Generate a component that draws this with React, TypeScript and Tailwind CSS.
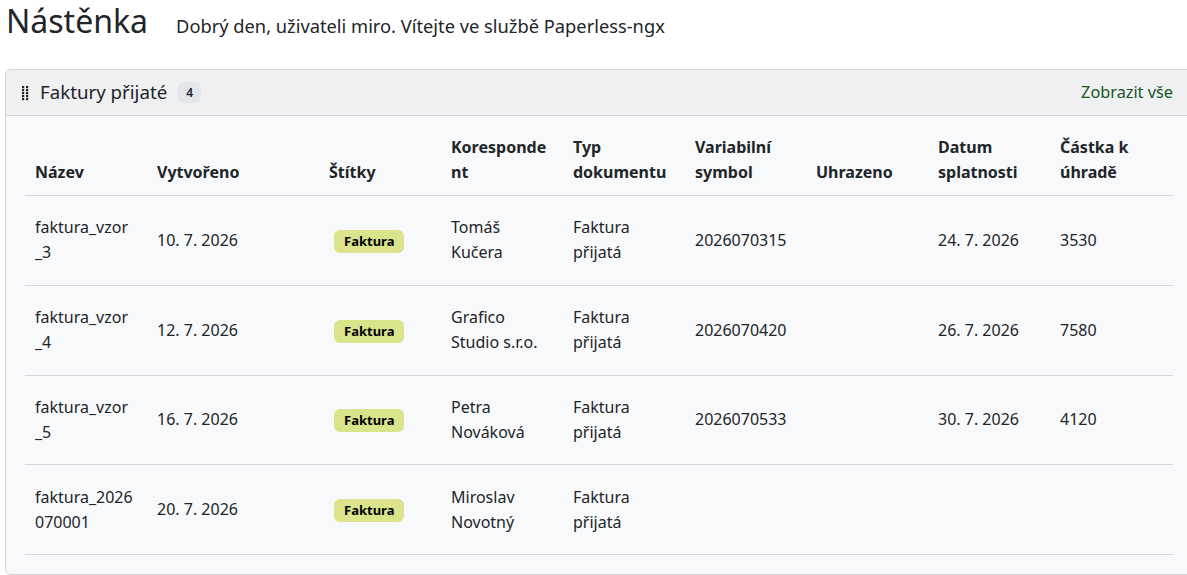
import React from "react";

type Row = {
    name: string[];
    created: string;
    corr: string[];
    type: string[];
    vs: string;
    due: string;
    amount: string;
};

const rows: Row[] = [
    { name: ["faktura_vzor", "_3"], created: "10. 7. 2026", corr: ["Tomáš", "Kučera"], type: ["Faktura", "přijatá"], vs: "2026070315", due: "24. 7. 2026", amount: "3530" },
    { name: ["faktura_vzor", "_4"], created: "12. 7. 2026", corr: ["Grafico", "Studio s.r.o."], type: ["Faktura", "přijatá"], vs: "2026070420", due: "26. 7. 2026", amount: "7580" },
    { name: ["faktura_vzor", "_5"], created: "16. 7. 2026", corr: ["Petra", "Nováková"], type: ["Faktura", "přijatá"], vs: "2026070533", due: "30. 7. 2026", amount: "4120" },
    { name: ["faktura_2026", "070001"], created: "20. 7. 2026", corr: ["Miroslav", "Novotný"], type: ["Faktura", "přijatá"], vs: "", due: "", amount: "" },
];

const cols = "grid grid-cols-[122px_172px_122px_122px_122px_121px_122px_122px_122px]";

function Lines({ parts }: { parts: string[] }) {
    return (
        <span>
            {parts.map((p, i) => (
                <React.Fragment key={i}>
                    {i > 0 && <br />}
                    {p}
                </React.Fragment>
            ))}
        </span>
    );
}

function GripIcon() {
    return (
        <svg width="8" height="16" viewBox="0 0 8 16" className="text-[#222]">
            {[0, 1, 2, 3, 4].map((r) =>
                [0, 1].map((c) => (
                    <rect key={`${r}-${c}`} x={c * 4 + 1} y={r * 3 + 1} width="2.2" height="2.2" fill="currentColor" />
                ))
            )}
        </svg>
    );
}

export default function App() {
    return (
        <div className="min-h-[575px] bg-white text-[#212529] font-['Noto_Sans',sans-serif] overflow-hidden">
            <div className="flex items-baseline pl-[6px] h-[69px]">
                <h1 className="text-[32px] leading-[42px] font-normal">Nástěnka</h1>
                <p className="ml-[28px] text-[18.3px]">Dobrý den, uživateli miro. Vítejte ve službě Paperless-ngx</p>
            </div>

            <div className="ml-[5px] w-[1200px] border border-[#d3d4d8] rounded-md bg-[#f8f9fa]">
                <div className="flex items-center h-[46px] pl-[15px] pr-[26px] bg-[#eff0f2] border-b border-[#d3d4d8] rounded-t-md">
                    <GripIcon />
                    <span className="ml-[11px] text-[18.7px]">Faktury přijaté</span>
                    <span className="ml-[11px] px-[8px] h-[21px] leading-[21px] rounded-md bg-[#e4e7ea] text-[12px] font-semibold">4</span>
                    <a className="ml-auto mr-[5px] text-[16.3px] text-[#17541f]">Zobrazit vše</a>
                </div>

                <div className="pt-[19px] pl-[19px] pb-[19px] w-[1167px]">
                    <div className={`${cols} items-end border-b border-[#d6d7dc] pb-[10px] font-bold text-[16px] leading-[25px]`}>
                        <div className="px-[10px]">Název</div>
                        <div className="px-[10px]">Vytvořeno</div>
                        <div className="px-[10px]">Štítky</div>
                        <div className="px-[10px]"><Lines parts={["Koresponde", "nt"]} /></div>
                        <div className="px-[10px]"><Lines parts={["Typ", "dokumentu"]} /></div>
                        <div className="px-[10px]"><Lines parts={["Variabilní", "symbol"]} /></div>
                        <div className="px-[10px]">Uhrazeno</div>
                        <div className="px-[10px]"><Lines parts={["Datum", "splatnosti"]} /></div>
                        <div className="px-[10px]"><Lines parts={["Částka k", "úhradě"]} /></div>
                    </div>
                    {rows.map((r, i) => (
                        <div key={i} className={`${cols} items-center h-[89.75px] border-b border-[#d6d7dc] text-[16px] leading-[25px]`}>
                            <div className="px-[10px]"><Lines parts={r.name} /></div>
                            <div className="px-[10px]">{r.created}</div>
                            <div className="pl-[15px]">
                                <span className="inline-block px-[10px] h-[23px] leading-[23px] rounded-md bg-[#dbe38b] text-black text-[13px] font-bold">Faktura</span>
                            </div>
                            <div className="px-[10px]"><Lines parts={r.corr} /></div>
                            <div className="px-[10px]"><Lines parts={r.type} /></div>
                            <div className="px-[10px]">{r.vs}</div>
                            <div className="px-[10px]"></div>
                            <div className="px-[10px]">{r.due}</div>
                            <div className="px-[10px]">{r.amount}</div>
                        </div>
                    ))}
                </div>
            </div>
        </div>
    );
}
